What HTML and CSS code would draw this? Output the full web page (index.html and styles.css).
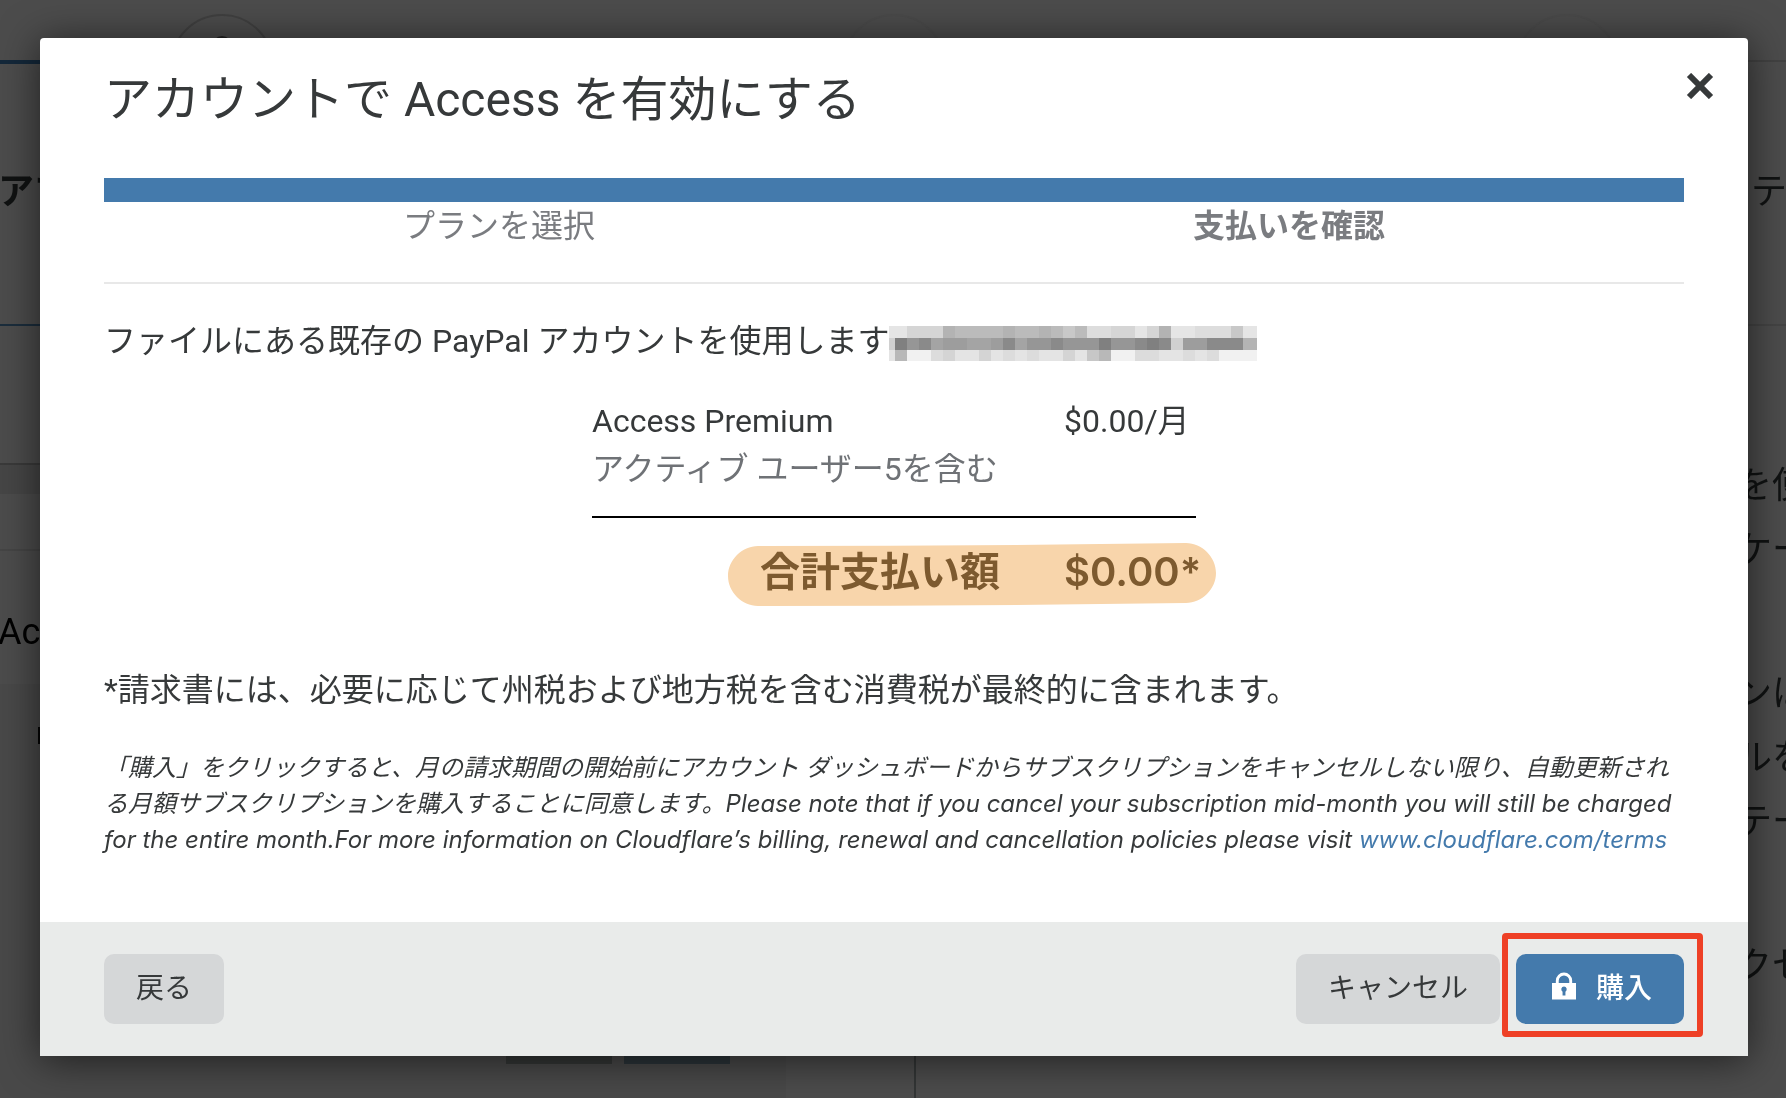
FILE: index.html
```
<!DOCTYPE html>
<html lang="ja">
<head>
    <meta charset="utf-8">
    <title>Access</title>
    <link rel="stylesheet" href="styles.css">
</head>
<body>
    <div class="page">
        <div class="tabs">
            <div class="tab active">
                <span class="circle"><span class="head"></span></span>
                <span class="tab-label">アプ</span>
            </div>
            <div class="tab"><span class="circle"></span></div>
            <div class="tab">
                <span class="circle"></span>
                <span class="tab-label">テ</span>
            </div>
        </div>
        <div class="columns">
            <div class="preview">
                <div class="preview-strip"></div>
                <div class="preview-bar"></div>
                <div class="preview-title">Ac</div>
                <div class="preview-body">
                    <div class="marker"></div>
                    <div class="preview-buttons"><span></span><span class="teal"></span></div>
                </div>
            </div>
            <div class="copy">
                <p>を使<br>ケー</p>
                <p>ンは<br>ルを<br>テー</p>
                <p>クセ</p>
            </div>
        </div>
    </div>

    <div class="overlay">
        <div class="modal" role="dialog" aria-labelledby="modal-title">
            <div class="modal-header">
                <h1 id="modal-title">アカウントで Access を有効にする</h1>
                <button class="close" aria-label="閉じる">
                    <svg width="28" height="26" viewBox="0 0 28 26"><path d="M3 2L25 24M25 2L3 24" stroke="#36393a" stroke-width="6" fill="none"/></svg>
                </button>
            </div>

            <div class="modal-body">
                <div class="progress"></div>
                <ol class="steps">
                    <li>プランを選択</li>
                    <li class="current">支払いを確認</li>
                </ol>

                <p class="account">ファイルにある既存の PayPal アカウントを使用します<svg class="mosaic" width="368" height="36" viewBox="0 0 368 36" shape-rendering="crispEdges">
                    <!-- row 1 -->
                    <path fill="#e5e5e5" d="M0 0h18v12H0zM246 0h12v12h-12zM282 0h24v12h-24zM354 0h14v12h-14z"/>
                    <path fill="#d5d5d5" d="M18 0h36v12H18zM222 0h24v12h-24zM258 0h12v12h-12z"/>
                    <path fill="#b3b3b3" d="M54 0h12v12H54zM114 0h12v12h-12zM150 0h12v12h-12zM270 0h12v12h-12z"/>
                    <path fill="#bbbbbb" d="M66 0h48v12H66zM126 0h24v12h-24zM162 0h12v12h-12zM186 0h12v12h-12z"/>
                    <path fill="#c8c8c8" d="M174 0h12v12h-12zM342 0h12v12h-12z"/>
                    <path fill="#dddddd" d="M198 0h24v12h-24zM306 0h36v12h-36z"/>
                    <!-- row 2 -->
                    <path fill="#d0d0d0" d="M0 12h6v12H0zM282 12h12v12h-12z"/>
                    <path fill="#808080" d="M6 12h12v12H6zM210 12h12v12h-12zM258 12h12v12h-12z"/>
                    <path fill="#969696" d="M18 12h12v12H18zM138 12h24v12h-24zM174 12h36v12h-36zM222 12h24v12h-24z"/>
                    <path fill="#8a8a8a" d="M30 12h12v12H30zM114 12h12v12h-12zM162 12h12v12h-12zM246 12h12v12h-12zM270 12h12v12h-12zM318 12h36v12h-36z"/>
                    <path fill="#9d9d9d" d="M54 12h24v12H54zM102 12h12v12h-12zM294 12h24v12h-24z"/>
                    <path fill="#a4a4a4" d="M42 12h12v12H42zM78 12h24v12H78zM126 12h12v12h-12z"/>
                    <path fill="#b4b4b4" d="M354 12h14v12h-14z"/>
                    <!-- row 3 -->
                    <path fill="#e4e4e4" d="M0 24h6v11H0zM66 24h24v11H66zM102 24h12v11h-12zM126 24h12v11h-12zM150 24h24v11h-24zM186 24h12v11h-12zM270 24h24v11h-24zM306 24h12v11h-12z"/>
                    <path fill="#b8b8b8" d="M6 24h12v11H6zM210 24h12v11h-12z"/>
                    <path fill="#f1f1f1" d="M18 24h24v11H18zM222 24h24v11h-24zM330 24h38v11h-38z"/>
                    <path fill="#dcdcdc" d="M42 24h12v11H42zM114 24h12v11h-12zM138 24h12v11h-12zM246 24h24v11h-24zM294 24h12v11h-12zM318 24h12v11h-12z"/>
                    <path fill="#d4d4d4" d="M54 24h12v11H54zM90 24h12v11H90zM174 24h12v11h-12z"/>
                    <path fill="#c7c7c7" d="M198 24h12v11h-12z"/>
                </svg></p>

                <table class="order">
                    <tbody>
                        <tr>
                            <td>Access Premium</td>
                            <td class="price">$0.00/月</td>
                        </tr>
                        <tr class="included">
                            <td>アクティブ ユーザー5を含む</td>
                            <td></td>
                        </tr>
                    </tbody>
                    <tfoot>
                        <tr>
                            <th scope="row">
                                <svg class="highlight" width="488" height="63" viewBox="0 0 488 63"><path fill="#f8d5ab" d="M30 3Q244 3 458 0C474 0 488 14 488 30S474 60 458 60Q244 63 30 63C14 63 0 49 0 33S14 3 30 3Z"/></svg>
                                <span>合計支払い額</span>
                            </th>
                            <td class="price"><span>$0.00*</span></td>
                        </tr>
                    </tfoot>
                </table>

                <p class="tax">*請求書には、必要に応じて州税および地方税を含む消費税が最終的に含まれます。</p>
                <p class="terms">「購入」をクリックすると、月の請求期間の開始前にアカウント ダッシュボードからサブスクリプションをキャンセルしない限り、自動更新される月額サブスクリプションを購入することに同意します。Please note that if you cancel your subscription mid-month you will still be charged for the entire month.For more information on Cloudflare’s billing, renewal and cancellation policies please visit <a href="#">www.cloudflare.com/terms</a></p>
            </div>

            <div class="modal-footer">
                <button class="btn">戻る</button>
                <div class="actions">
                    <button class="btn">キャンセル</button>
                    <div class="callout">
                        <button class="btn primary">
                            <svg width="24" height="28" viewBox="0 0 25 28"><path fill="#fff" fill-rule="evenodd" d="M0 11H4V8.500A8.500 8.500 0 0 1 21 8.500V11H25V28H0ZM7 11H18V8.500A5.500 5.500 0 0 0 7 8.500ZM12.500 14.500A3 3 0 0 0 11 20V24H14V20A3 3 0 0 0 12.500 14.500Z"/></svg>
                            購入
                        </button>
                    </div>
                </div>
            </div>
        </div>
    </div>
</body>
</html>
```
FILE: styles.css
```
* { box-sizing: border-box; }
body { margin: 0; background: #4c4c4c; color: #36393a; font-family: Roboto, "Noto Sans CJK JP", sans-serif; font-size: 32px; line-height: 48px; }
p, h1, ol { margin: 0; padding: 0; font-weight: normal; }

/* page behind the modal */
.page { position: fixed; inset: 0; overflow: hidden; display: flex; flex-direction: column; color: #101212; font-size: 36px; }
.tabs { display: flex; margin-left: -114px; margin-right: -117px; padding-top: 60px; }
.tab { flex: 1; height: 266px; border-top: 2px solid #424242; border-bottom: 2px solid #444; display: flex; flex-direction: column; align-items: center; }
.tab.active { border-top: 4px solid #14283a; border-bottom-color: #1b2d3c; }
.circle { flex: none; width: 104px; height: 104px; margin-top: -48px; border: 2px solid #4a4a4a; border-radius: 50%; background: #4c4c4c; display: flex; justify-content: center; }
.active .circle { margin-top: -50px; border-color: #404040; }
.head { width: 20px; height: 20px; margin-top: 20px; border-radius: 50%; background: #222; }
.tab-label { align-self: flex-end; margin-top: 50px; padding-right: 116px; }
.active .tab-label { align-self: flex-start; padding: 0 0 0 112px; font-weight: bold; }
.columns { flex: 1; display: flex; }
.preview { width: 916px; border-right: 2px solid #333636; padding-top: 137px; display: flex; flex-direction: column; }
.preview-strip { height: 31px; border-top: 2px solid #3a3a3a; background: #464646; }
.preview-bar { height: 57px; border-bottom: 2px solid #454545; }
.preview-title { height: 133px; padding-top: 56px; color: #000; line-height: 50px; text-indent: -2px; }
.preview-body { flex: 1; width: 786px; padding-top: 43px; background: #494949; }
.marker { width: 20px; height: 17px; margin-left: 38px; background: #050505; }
.preview-buttons { display: flex; gap: 12px; padding: 280px 0 0 506px; }
.preview-buttons span { width: 106px; height: 40px; background: #353837; }
.preview-buttons .teal { background: #2c353a; }
.copy { flex: 1; display: flex; flex-direction: column; align-items: flex-end; gap: 80px; margin-right: -22px; padding-top: 128px; line-height: 64px; }

/* modal */
.overlay { position: relative; padding: 38px 38px 42px 40px; }
.modal { background: #fff; border-radius: 4px 4px 0 0; box-shadow: 0 4px 40px rgba(0, 0, 0, 0.6); }
.modal-header { display: flex; justify-content: space-between; align-items: flex-start; padding: 24px 34px 0 64px; }
h1 { font-size: 48px; line-height: 76px; }
.close { display: flex; margin: 0; padding: 11px 0; border: none; background: none; cursor: pointer; }
.modal-body { padding: 40px 64px 64px; }
.progress { height: 24px; background: #447aac; }
.steps { display: flex; list-style: none; height: 82px; border-bottom: 2px solid #e8e8e8; color: #7a7c80; text-align: center; }
.steps li { flex: 1; }
.steps .current { font-weight: bold; }
.account { display: flex; align-items: center; padding-top: 33px; }
.mosaic { margin-top: 6px; }
.order { width: 604px; margin: 32px auto 0; border-spacing: 0; table-layout: fixed; text-align: left; }
.order td, .order th { padding: 0; white-space: nowrap; }
.order .price { width: 132px; }
.included { color: #6f7276; }
.included td { height: 73px; vertical-align: top; border-bottom: 2px solid #000; }
tfoot { color: #7d5a2f; font-family: Inter, "Noto Sans CJK JP", sans-serif; font-size: 40px; line-height: 60px; font-weight: 600; }
.order tfoot td, .order tfoot th { padding-top: 24px; }
tfoot th { position: relative; text-align: right; }
.order tfoot th { padding-right: 64px; }
tfoot span { position: relative; }
.highlight { position: absolute; left: 136px; top: 25px; }
.tax { padding-top: 64px; }
.terms { padding-top: 36px; font-family: Inter, "Noto Sans CJK JP", sans-serif; font-size: 24px; line-height: 36px; font-style: italic; }
.terms a { color: #447aac; text-decoration: none; }

.modal-footer { display: flex; justify-content: space-between; padding: 32px 64px; background: #e9ebea; }
.actions { display: flex; gap: 16px; }
.btn { display: flex; align-items: center; gap: 20px; height: 70px; padding: 0 32px; border: none; border-radius: 10px; background: #d5d7d8; color: #36393a; font: inherit; font-size: 28px; cursor: pointer; }
.primary { padding-left: 36px; background: #447aac; color: #fff; font-weight: 500; }
.primary svg { margin-bottom: 6px; }
.callout { position: relative; }
.callout::after { content: ""; position: absolute; inset: -21px -19px -13px -14px; border: 6px solid #ee4026; border-radius: 4px; pointer-events: none; }
```
